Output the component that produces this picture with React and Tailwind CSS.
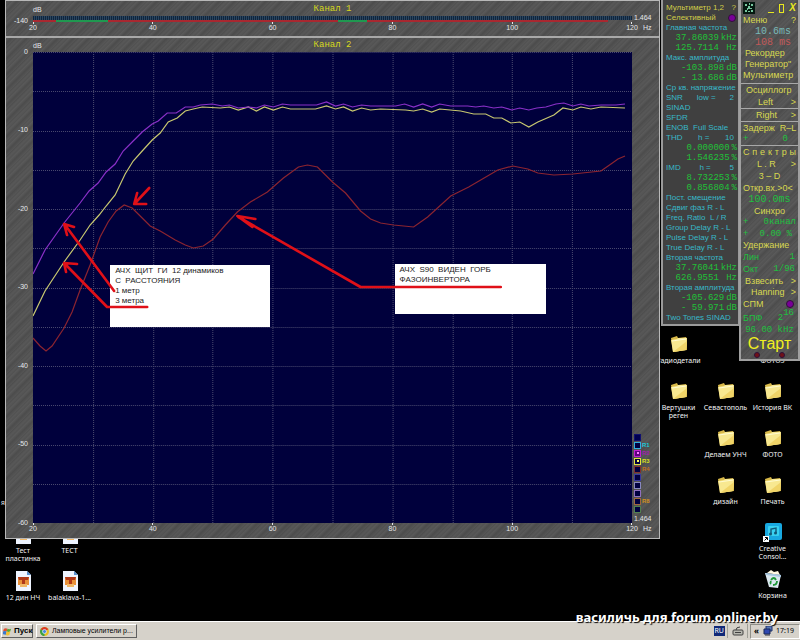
import React from "react";
import clsx from "clsx";

const PURPLE =
  "33,274 45,250 64,223 72,213 80,203 89,191 98,183 106,172 115,164 123,151 133,141 142,132 152,124 158,121 167,113 176,113 185,107 193,107 200,105 212,104 222,106 229,105 238,108 248,107 256,108 264,105 273,107 282,104 290,105 316,105 326,102 335,106 343,104 352,107 361,105 370,106 395,106 404,104 413,107 422,104 431,107 439,104 450,106 467,106 475,107 483,106 493,108 501,107 511,110 519,108 528,110 536,108 545,107 555,104 563,103 572,106 580,104 588,106 600,105 615,105 624,104";
const YELLOW =
  "33,316 45,291 64,262 80,240 90,225 99,215 106,206 115,195 125,174 133,161 142,151 152,140 160,133 168,122 177,118 185,111 193,109 202,107 220,108 229,107 238,110 248,107 256,111 264,107 273,110 282,107 290,109 315,109 326,106 335,109 343,107 352,111 361,108 370,110 380,109 405,110 413,111 422,109 431,112 439,109 460,111 473,114 485,114 493,118 501,118 510,123 519,122 528,127 537,122 553,115 562,108 572,110 580,107 590,109 600,107 624,108";
const RED =
  "33,338 40,346 46,351 52,346 64,328 72,312 80,290 90,265 100,237 108,222 116,211 124,205 132,208 141,217 150,226 160,231 175,240 185,245 193,248 203,246 213,239 225,225 237,212 250,202 267,192 283,178 298,167 307,165 317,167 332,182 345,193 360,211 370,219 380,223 393,225 413,227 427,217 450,196 468,187 497,170 512,166 527,169 537,173 553,175 572,174 600,171 610,164 617,159 624,156";

const HZ = [20, 40, 60, 80, 100, 120];
const DB = [0, -10, -20, -30, -40, -50, -60];

const notes = [
  {
    x: 77,
    y: 213,
    size: "h-[62px] w-[160px]",
    text: "АЧХ  ЩИТ  ГИ  12 динамиков\nС  РАССТОЯНИЯ\n1 метр\n3 метра",
  },
  {
    x: 361,
    y: 212,
    size: "h-[50px] w-[151px]",
    text: "АЧХ  S90  ВИДЕН  ГОРБ\nФАЗОИНВЕРТОРА",
  },
];

const channels = [
  { box: "border-[#101070] bg-[#000050]" },
  { box: "border-[#30b0e0] bg-[#000040]", label: "R1", color: "text-[#20c8d8]" },
  { box: "border-[#c020d0] bg-[#600080]", dot: "bg-[#ff80ff]", label: "R2", color: "text-[#a020b0]" },
  { box: "border-[#e0e040] bg-[#000040]", dot: "bg-[#ffff60]", label: "R3", color: "text-[#d8e020]" },
  { box: "border-[#803030] bg-[#000040]", label: "R4", color: "text-[#c07020]" },
  { box: "border-[#3838a0] bg-[#000040]" },
  { box: "border-[#8888c0] bg-[#000040]" },
  { box: "border-[#9070c0] bg-[#000040]" },
  { box: "border-[#a06840] bg-[#000040]", label: "R8", color: "text-[#d09020]" },
  { box: "border-[#508050] bg-[#000040]" },
];

// kind: t = caption, v = green value with a unit
const meter = [
  ["t", "Главная частота"],
  ["v", "37.86039", "kHz"],
  ["v", "125.7114", " Hz"],
  ["t", "Макс. амплитуда"],
  ["v", "-103.898", "dB"],
  ["v", "- 13.686", "dB"],
  ["t", "Ср кв. напряжение"],
  ["t", "SNR", "low =", "2"],
  ["t", "SINAD"],
  ["t", "SFDR"],
  ["t", "ENOB  Full Scale"],
  ["t", "THD", "h =", "10"],
  ["v", "0.000000", "%"],
  ["v", "1.546235", "%"],
  ["t", "IMD", "h =", "5"],
  ["v", "8.732253", "%"],
  ["v", "0.856804", "%"],
  ["t", "Пост. смещение"],
  ["t", "Сдвиг фаз R - L"],
  ["t", "Freq. Ratio  L / R"],
  ["t", "Group Delay R - L"],
  ["t", "Pulse Delay R - L"],
  ["t", "True Delay R - L"],
  ["t", "Вторая частота"],
  ["v", "37.76041", "kHz"],
  ["v", "626.9551", " Hz"],
  ["t", "Вторая амплитуда"],
  ["v", "-105.629", "dB"],
  ["v", "- 59.971", "dB"],
  ["t", "Two Tones SINAD"],
];

const texture =
  "bg-[repeating-linear-gradient(135deg,#4e4e4e_0px,#585858_2px,#525252_4px,#5a5a5a_5px,#4c4c4c_8px,#565656_11px)]";

function HzAxis() {
  return (
    <div className="flex justify-between">
      {HZ.map((hz) => (
        <div key={hz} className="flex w-0 flex-col items-center">
          <i className="h-[2px] w-px bg-gray-200" />
          <span className="leading-[8px]">{hz}</span>
        </div>
      ))}
    </div>
  );
}

function Arrows() {
  return (
    <svg
      className="absolute inset-0 h-full w-full"
      viewBox="33 52 598 471"
      preserveAspectRatio="none"
      fill="none"
      stroke="#e01018"
      strokeWidth="2.6"
      strokeLinecap="round"
      strokeLinejoin="round"
    >
      <path d="M114 291 65 225M67 235 64 224 74 227" />
      <path d="M147 307H107L65 264M66 272 64 263 77 264" />
      <path d="M149 188 135 203M137 193 134 204H146" />
      <path d="M500 287H360L238 217M255 219 237 216 252 227" />
    </svg>
  );
}

function Plot() {
  return (
    <div className="relative bg-[#00003c]">
      <svg
        className="absolute inset-0 h-full w-full"
        viewBox="33 52 598 471"
        preserveAspectRatio="none"
        fill="none"
      >
        <g stroke="#4a4a70" strokeWidth="1" strokeDasharray="1 1">
          {[1, 2, 3, 4, 5, 6, 7, 8, 9].map((i) => (
            <path key={i} d={`M${Math.round(33 + i * 59.8) + 0.5} 52V523`} />
          ))}
          {[0, 1, 2, 3, 4, 5, 6, 7, 8, 9, 10, 11].map((i) => (
            <path key={i} d={`M33 ${Math.round(52 + i * 39.25) + 0.5}H631`} />
          ))}
        </g>
        <polyline points={RED} stroke="#8c2430" strokeWidth="1.2" />
        <polyline points={YELLOW} stroke="#c8c870" strokeWidth="1.2" />
        <polyline points={PURPLE} stroke="#8a30c8" strokeWidth="1.2" />
      </svg>
      {notes.map((n) => (
        <p
          key={n.x}
          className={clsx(
            "absolute whitespace-pre bg-white pl-[5px] pt-px text-[8px] leading-[10px] text-[#222]",
            n.size
          )}
          style={{ left: `${(n.x / 598) * 100}%`, top: `${(n.y / 471) * 100}%` }}
        >
          {n.text}
        </p>
      ))}
      <Arrows />
    </div>
  );
}

function ChartWindow() {
  return (
    <section
      className={clsx(
        "absolute left-[5px] right-[140px] top-0 flex flex-col border border-[#b8b8b8] text-[7px] text-gray-200",
        texture
      )}
    >
      <div className="grid grid-cols-[27px_1fr_27px] grid-rows-[15px_6px_14px] border-b-2 border-[#a8a8a8]">
        <span />
        <div className="flex items-center">
          <span className="w-0 pt-[3px]">dB</span>
          <h2 className="flex-1 text-center font-['Liberation_Mono',monospace] text-[9px] leading-[10px] text-[#d8d820]">
            Канал 1
          </h2>
        </div>
        <span />
        <span className="self-end pr-[5px] text-right leading-[2px]">-140</span>
        <div className="flex flex-col justify-between">
          <div className="h-[4px] w-full bg-[repeating-linear-gradient(90deg,#10243c_0px,#10243c_1px,#2a4660_1px,#2a4660_2px)]" />
          <div className="flex h-[2px] w-[96%] bg-[#a82830]">
            <i className="ml-[4%] h-[2px] w-[9%] bg-[#209850]" />
            <i className="ml-[40%] h-[2px] w-[5%] bg-[#209850]" />
          </div>
        </div>
        <span className="pl-[2px] leading-[4px]">1.464</span>
        <span />
        <HzAxis />
        <span className="pl-[11px] pt-[2px] leading-[8px]">Hz</span>
      </div>
      <div className="grid grid-cols-[27px_1fr_27px] grid-rows-[14px_471px_15px]">
        <span />
        <div className="flex items-center">
          <span className="w-0 pt-[3px]">dB</span>
          <h2 className="flex-1 text-center font-['Liberation_Mono',monospace] text-[9px] leading-[10px] text-[#d8d820]">
            Канал 2
          </h2>
        </div>
        <span />
        <div className="flex flex-col justify-between pr-[5px]">
          {DB.map((db) => (
            <div key={db} className="flex h-0 items-center justify-end">
              {db}
            </div>
          ))}
        </div>
        <Plot />
        <div className="flex flex-col justify-end pl-[2px]">
          {channels.map((c, i) => (
            <div key={i} className="flex h-[8px] items-center gap-px text-[6px] leading-[7px]">
              <i className={clsx("flex h-[7px] w-[7px] items-center justify-center border", c.box)}>
                {c.dot && <i className={clsx("h-[2px] w-[2px]", c.dot)} />}
              </i>
              {c.label && <b className={c.color}>{c.label}</b>}
            </div>
          ))}
          <span className="pt-[2px] leading-[8px]">1.464</span>
        </div>
        <span />
        <HzAxis />
        <span className="pl-[11px] pt-[2px] leading-[8px]">Hz</span>
      </div>
    </section>
  );
}

function Lamp({ className }) {
  return <i className={clsx("rounded-full border border-[#301038]", className)} />;
}

function MeterWindow() {
  return (
    <section className="absolute right-[60px] top-0 w-[79px] border-2 border-t-0 border-[#9a9a9a] bg-[#404040] pb-px pl-[3px] pr-px pt-[3px] text-[8px] leading-[10px] text-[#38b8c8]">
      <div className="flex justify-between whitespace-nowrap pr-px text-[#d0cc48]">
        <h2>Мультиметр 1,2</h2>
        <button>?</button>
      </div>
      <div className="flex items-center justify-between whitespace-nowrap pr-px text-[#d0cc48]">
        Селективный
        <Lamp className="h-[8px] w-[8px] bg-[#780098]" />
      </div>
      {meter.map(([kind, ...cells], i) =>
        kind === "t" ? (
          <div key={i} className="flex h-[10px] justify-between whitespace-pre pr-[3px]">
            {cells.map((c) => (
              <span key={c}>{c}</span>
            ))}
          </div>
        ) : (
          <div
            key={i}
            className="flex h-[10px] justify-end gap-[2px] whitespace-pre font-['Liberation_Mono',monospace] text-[9px] text-[#20c038]"
          >
            <span>{cells[0]}</span>
            <span>{cells[1]}</span>
          </div>
        )
      )}
    </section>
  );
}

function Row({ children, className, tight }) {
  return (
    <div
      className={clsx(
        "flex items-center whitespace-pre leading-[11px]",
        tight ? "h-[11px]" : "h-[12px]",
        className || "justify-between"
      )}
    >
      {children}
    </div>
  );
}

function ToolWindow() {
  const value = "font-['Liberation_Mono',monospace] text-[#20c040]";
  return (
    <section
      className={clsx(
        "absolute right-0 top-0 w-[61px] border-2 border-t-0 border-[#a0a0a0] text-[9px] text-[#d8d850]",
        texture
      )}
    >
      <div className="flex h-[15px] items-center gap-[5px] px-[2px] pt-px font-bold">
        <svg className="mr-auto h-[12px] w-[12px]" viewBox="0 0 12 12">
          <path d="M0 0h12v12H0z" fill="#041810" />
          <path
            d="M2 2h2v2H2zM8 2h2v2H8zM5 4h2v3H5zM2 8h2v2H2zM8 8h2v2H8zM4 6h1v2H4zM7 6h2v1H7zM6 1h1v2H6zM5 9h2v1H5z"
            fill="#78c8a0"
          />
        </svg>
        <button className="h-[9px] w-[6px] border-b border-[#e8e820]" aria-label="Свернуть" />
        <button className="h-[9px] w-[5px] border border-[#e8e820]" aria-label="Развернуть" />
        <button className="text-[10px] italic leading-[10px] text-[#e8e820]">X</button>
      </div>
      <div className="border-b border-[#a8a8a8] px-[2px] pb-[2px]">
        <Row tight>
          <span>Меню</span>
          <button>?</button>
        </Row>
        <Row tight className="justify-end pr-[5px] font-['Liberation_Mono',monospace] text-[10px] text-[#78b8b8]">
          10.6ms
        </Row>
        <Row tight className="justify-end pr-[5px] font-['Liberation_Mono',monospace] text-[10px] text-[#c05858]">
          108 ms
        </Row>
        <Row tight>
          <button className="pl-[2px]">Рекордер</button>
        </Row>
        <Row tight>
          <button className="pl-[2px]">Генератор"</button>
        </Row>
        <Row tight>
          <button>Мультиметр</button>
        </Row>
      </div>
      <div className="border-b border-[#a8a8a8] px-[2px]">
        <Row>
          <span className="pl-[3px]">Осциллогр</span>
        </Row>
        <Row>
          <span className="pl-[15px]">Left</span>
          <button>&gt;</button>
        </Row>
      </div>
      <div className="border-b border-[#a8a8a8] px-[2px]">
        <Row>
          <span className="pl-[13px]">Right</span>
          <button>&gt;</button>
        </Row>
      </div>
      <div className="border-b border-[#a8a8a8] px-[2px]">
        <Row>Задерж  R–L</Row>
        <Row tight className={clsx("justify-between pr-[8px]", value)}>
          <span>+</span>
          <span>0</span>
        </Row>
      </div>
      <div className="px-[2px]">
        <Row>
          {"Спектры".split("").map((ch, i) => (
            <span key={i}>{ch}</span>
          ))}
        </Row>
        <Row>
          <span className="pl-[14px]">L . R</span>
          <button>&gt;</button>
        </Row>
        <Row className="justify-center">3 – D</Row>
        <Row>Откр.вх.&gt;0&lt;</Row>
        <Row tight className={clsx("justify-center text-[10px]", value)}>
          100.0ms
        </Row>
        <Row className="justify-center">Синхро</Row>
        <Row tight className={clsx("justify-between", value)}>
          <span>+</span>
          <span>0канал</span>
        </Row>
        <Row className={clsx("justify-between pr-[4px]", value)}>
          <span>+</span>
          <span>0.00 %</span>
        </Row>
        <Row tight>Удержание</Row>
        <Row className={clsx("justify-between pr-px", value)}>
          <span className="font-['Liberation_Sans',sans-serif]">Лин</span>
          <span>1</span>
        </Row>
        <Row className={clsx("justify-between pr-px", value)}>
          <span className="font-['Liberation_Sans',sans-serif]">Окт</span>
          <span>1/96</span>
        </Row>
        <Row>
          <span className="pl-[2px]">Взвесить</span>
          <button>&gt;</button>
        </Row>
        <Row tight>
          <span className="pl-[8px]">Hanning</span>
          <button>&gt;</button>
        </Row>
        <Row className="justify-between pr-[2px]">
          <span>СПМ</span>
          <Lamp className="h-[8px] w-[8px] bg-[#780098]" />
        </Row>
        <Row className={clsx("mt-[2px] justify-between pr-[2px]", value)}>
          <span className="font-['Liberation_Sans',sans-serif]">БПФ</span>
          <span>
            2<sup className="text-[9px]">16</sup>
          </span>
        </Row>
        <Row className={clsx("justify-center", value)}>96.00 kHz</Row>
      </div>
      <button className="block w-full text-center text-[16px] leading-[16px] text-[#f0f020]">Старт</button>
      <div className="flex justify-around px-[4px] pb-px">
        <Lamp className="h-[6px] w-[6px] bg-[#701018]" />
        <Lamp className="h-[6px] w-[6px] bg-[#701018]" />
      </div>
    </section>
  );
}

function Folder() {
  return (
    <svg viewBox="0 0 20 20" className="h-[20px] w-[20px]">
      <path d="M2 4 8 2l1 2 8-1 1 2v11L4 18z" fill="#d8b848" />
      <path d="M2 6 8 5l1-1 9 0-1 12-13 2z" fill="#f8e890" />
      <path d="M4 18 18 7l-1 9z" fill="#f0d468" />
      <path d="M3 7 17 5" stroke="#fffbd0" strokeWidth="1" />
    </svg>
  );
}

function ArchiveFile() {
  return (
    <svg viewBox="0 0 20 20" className="h-[20px] w-[20px]">
      <path d="M3 0h11l4 4v16H3z" fill="#eef4ff" />
      <path d="M14 0v4h4z" fill="#5890d0" />
      <path d="M5 6h11v8H5z" fill="#e89038" />
      <path d="M5 6h11l-1 3H6zM9 9h3v5H9z" fill="#b03818" />
      <path d="M7 13h7v3H7z" fill="#f0b868" />
    </svg>
  );
}

function CreativeConsole() {
  return (
    <svg viewBox="0 0 20 20" className="h-[20px] w-[20px]">
      <rect x="2" y="1" width="17" height="17" rx="2" fill="#18a8e0" />
      <rect x="5" y="4" width="11" height="10" rx="1" fill="#38d0f0" />
      <path d="M8 12V7l5-1v5" fill="none" stroke="#105878" strokeWidth="1.4" />
      <circle cx="7.5" cy="12" r="1.5" fill="#105878" />
      <circle cx="12.5" cy="11" r="1.5" fill="#105878" />
      <path d="M0 14h6v6H0z" fill="#fff" />
      <path d="M1.5 18.5 4 16M2 15.5h2.5V18" stroke="#000" fill="none" />
    </svg>
  );
}

function RecycleBin() {
  return (
    <svg viewBox="0 0 20 20" className="h-[20px] w-[20px]">
      <path d="M4 4 8 1l3 2 4-1 2 4z" fill="#fff8e0" />
      <path d="M2 4 18 6l-3 13-9-1z" fill="#dce8f0" />
      <path d="M2 4 18 6v2L3 6z" fill="#a8c8e0" />
      <path d="M8 11q3-4 5 0M14 12q0 4-4 4M8 15q-1-1 0-3" fill="none" stroke="#209838" strokeWidth="1.8" />
    </svg>
  );
}

function DesktopIcon({ item }) {
  if (!item) return <span />;
  const Icon = item.icon || Folder;
  return (
    <button className="flex flex-col items-center text-center font-['Noto_Sans',sans-serif] text-[7px] leading-[8px] text-gray-100">
      <Icon />
      <span className="mt-[3px] whitespace-pre">{item.label}</span>
    </button>
  );
}

const rightIcons = [
  { label: "Радиодетали" },
  null,
  { label: "ФОТО3" },
  { label: "Вертушки\nреген" },
  { label: "Севастополь" },
  { label: "История ВК" },
  null,
  { label: "Делаем УНЧ" },
  { label: "ФОТО" },
  null,
  { label: "дизайн" },
  { label: "Печать" },
  null,
  null,
  { label: "Creative\nConsol...", icon: CreativeConsole },
  null,
  null,
  { label: "Корзина", icon: RecycleBin },
];

const leftIcons = [
  { label: "Тест\nпластинка", icon: ArchiveFile },
  { label: "ТЕСТ", icon: ArchiveFile },
  { label: "12 дин НЧ", icon: ArchiveFile },
  { label: "balaklava-1...", icon: ArchiveFile },
];

function Taskbar() {
  const raised = "border border-b-[#606060] border-l-white border-r-[#606060] border-t-white";
  return (
    <footer className="flex h-[19px] items-center border-t border-white bg-[#d6d2ca] pl-px font-['Noto_Sans',sans-serif] text-[8px] leading-[10px] text-black">
      <button
        className={clsx(
          "flex h-[14px] w-[32px] items-center gap-[2px] pl-px font-['Liberation_Sans',sans-serif] font-bold",
          raised
        )}
      >
        <svg viewBox="0 0 10 10" className="h-[9px] w-[9px] shrink-0">
          <path d="M1 2q2-1 4 0L4 5Q2 4 0 5z" fill="#e05030" />
          <path d="M5 2q2 1 4 0L8 5Q6 6 4 5z" fill="#58a838" />
          <path d="M0 5q2-1 4 0L3 9Q2 8 0 8z" fill="#3878d0" />
          <path d="M4 5q2 1 4 0L7 9Q5 10 3 9z" fill="#f0c030" />
        </svg>
        Пуск
      </button>
      <button
        className={clsx(
          "ml-[3px] flex h-[14px] w-[101px] items-center gap-[3px] whitespace-nowrap pl-[3px] font-['Liberation_Sans',sans-serif] text-[7px]",
          raised
        )}
      >
        <svg viewBox="0 0 10 10" className="h-[9px] w-[9px] shrink-0">
          <circle cx="5" cy="5" r="5" fill="#e8c020" />
          <path d="M5 5 .7 2.5A5 5 0 0 1 9.3 2.5z" fill="#d83828" />
          <path d="M5 5 .7 2.5A5 5 0 0 0 5 10z" fill="#38a048" />
          <circle cx="5" cy="5" r="2.2" fill="#4888e0" stroke="#fff" strokeWidth=".7" />
        </svg>
        Ламповые усилители р...
      </button>
      <span className="ml-auto bg-[#102878] px-px text-[7px] text-white">RU</span>
      <i className="ml-[2px] h-[14px] w-px bg-[#a0a098]" />
      <svg viewBox="0 0 12 10" className="ml-[4px] h-[10px] w-[12px]" fill="none" stroke="#404040">
        <rect x="1" y="4" width="10" height="5" rx="1" fill="#b8b8b0" />
        <path d="M3 6.5h6M4 4q0-3 4-3" />
      </svg>
      <i className="ml-[3px] h-[14px] w-px bg-[#a0a098]" />
      <div className="ml-[2px] flex h-[15px] w-[50px] items-center justify-between border border-b-white border-l-[#909088] border-r-white border-t-[#909088] pl-[3px] pr-[5px]">
        <b>«</b>
        <svg viewBox="0 0 10 10" className="h-[10px] w-[10px]">
          <path d="M3 0h6v5H3z" fill="#5878b8" stroke="#203068" />
          <path d="M1 3h6v5H1z" fill="#3048b0" stroke="#182858" />
          <path d="M2 9h5" stroke="#303040" />
        </svg>
        <time className="text-[7px]">17:19</time>
      </div>
    </footer>
  );
}

export default function App() {
  return (
    <div className="flex min-h-screen flex-col bg-black font-['Liberation_Sans',Arial,sans-serif]">
      <main className="relative flex-1">
        <span className="absolute left-px top-[498px] text-[7px] leading-[10px] text-gray-200">я</span>
        <div className="absolute left-0 top-[524px] grid auto-rows-[47px] grid-cols-[46px_47px] items-start">
          {leftIcons.map((item, i) => (
            <DesktopIcon key={i} item={item} />
          ))}
        </div>
        <div className="absolute right-[4px] top-[334px] grid auto-rows-[47px] grid-cols-[47px_47px_47px] items-start">
          {rightIcons.map((item, i) => (
            <DesktopIcon key={i} item={item} />
          ))}
        </div>
        <ChartWindow />
        <MeterWindow />
        <ToolWindow />
        <p className="absolute bottom-[-4px] right-[22px] whitespace-nowrap font-['Noto_Sans',sans-serif] text-[13px] font-bold leading-[16px] text-white [text-shadow:1px_1px_1px_#000]">
          василичь для forum.onliner.by
        </p>
      </main>
      <Taskbar />
    </div>
  );
}
